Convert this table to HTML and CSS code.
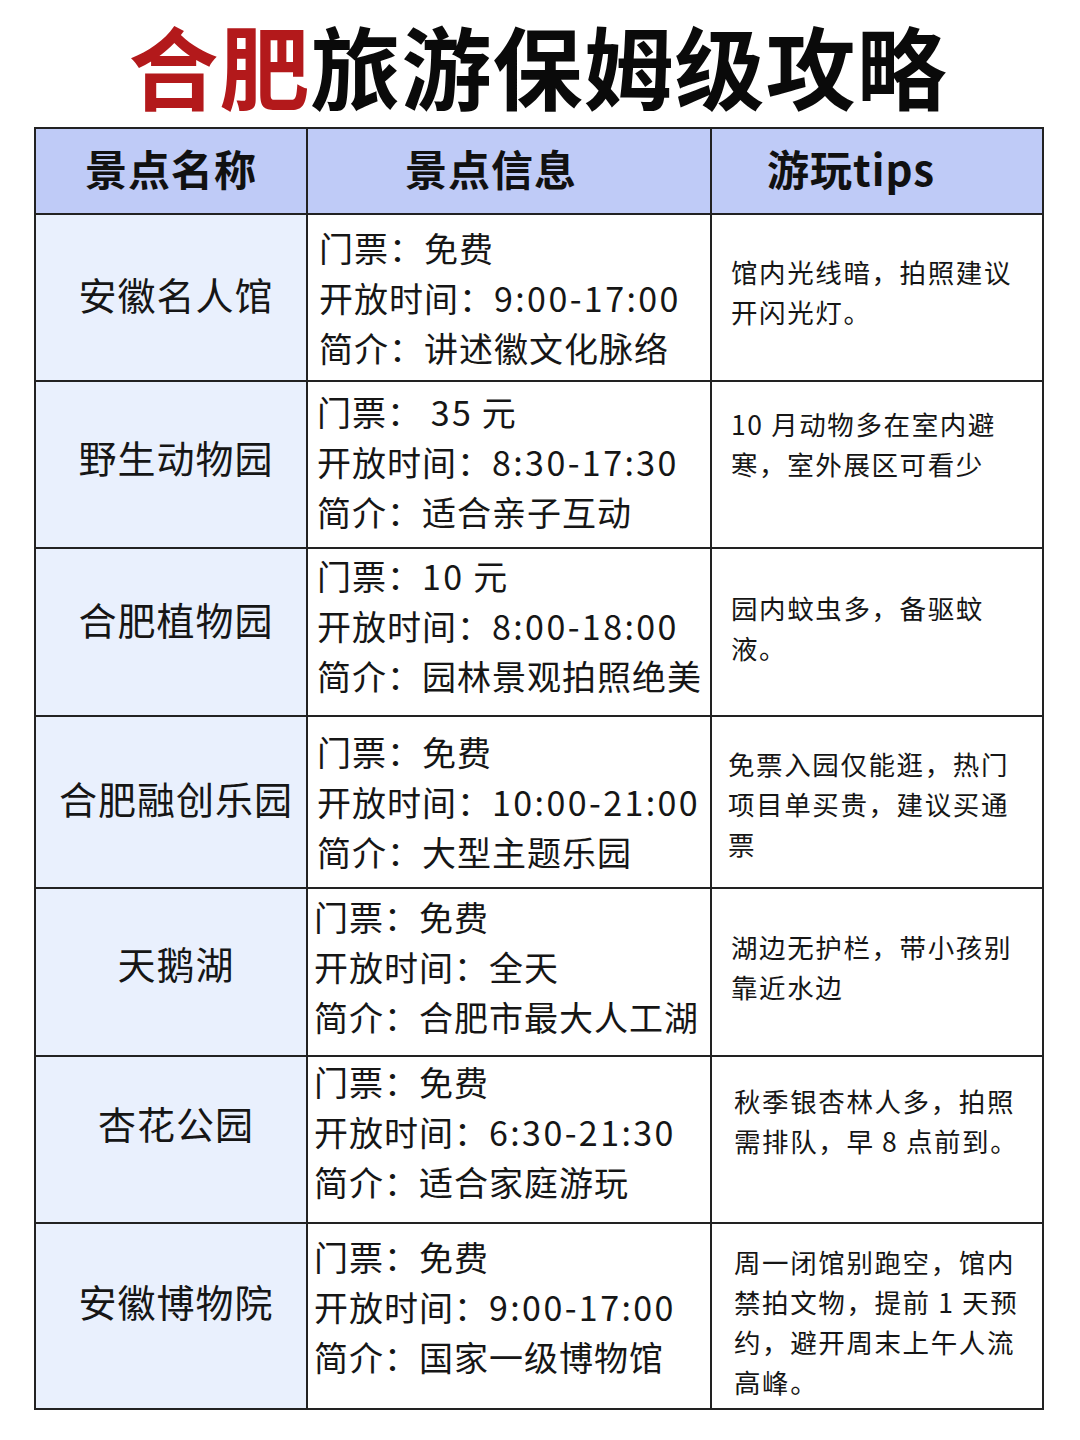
FILE: index.html
```html
<!DOCTYPE html>
<html lang="zh">
<head>
<meta charset="utf-8">
<link rel="stylesheet" href="styles.css">
</head>
<body>
<div class="page">
  <h1 class="title"><span class="red">合肥</span>旅游保姆级攻略</h1>
  <table class="guide">
    <colgroup><col class="c1"><col class="c2"><col class="c3"></colgroup>
    <thead>
      <tr class="rh"><th class="h1">景点名称</th><th class="h2">景点信息</th><th class="h3">游玩tips</th></tr>
    </thead>
    <tbody>
      <tr class="r1">
        <td class="name">安徽名人馆</td>
        <td class="info">门票：免费<br>开放时间：<span class="num">9:00-17:00</span><br>简介：讲述徽文化脉络</td>
        <td class="tips">馆内光线暗，拍照建议<br>开闪光灯。</td>
      </tr>
      <tr class="r2">
        <td class="name">野生动物园</td>
        <td class="info">门票： <span class="num">35</span> 元<br>开放时间：<span class="num">8:30-17:30</span><br>简介：适合亲子互动</td>
        <td class="tips">10 月动物多在室内避<br>寒，室外展区可看少</td>
      </tr>
      <tr class="r3">
        <td class="name">合肥植物园</td>
        <td class="info">门票：<span class="num">10</span> 元<br>开放时间：<span class="num">8:00-18:00</span><br>简介：园林景观拍照绝美</td>
        <td class="tips">园内蚊虫多，备驱蚊<br>液。</td>
      </tr>
      <tr class="r4">
        <td class="name">合肥融创乐园</td>
        <td class="info">门票：免费<br>开放时间：<span class="num">10:00-21:00</span><br>简介：大型主题乐园</td>
        <td class="tips">免票入园仅能逛，热门<br>项目单买贵，建议买通<br>票</td>
      </tr>
      <tr class="r5">
        <td class="name">天鹅湖</td>
        <td class="info">门票：免费<br>开放时间：全天<br>简介：合肥市最大人工湖</td>
        <td class="tips">湖边无护栏，带小孩别<br>靠近水边</td>
      </tr>
      <tr class="r6">
        <td class="name">杏花公园</td>
        <td class="info">门票：免费<br>开放时间：<span class="num">6:30-21:30</span><br>简介：适合家庭游玩</td>
        <td class="tips">秋季银杏林人多，拍照<br>需排队，早 8 点前到。</td>
      </tr>
      <tr class="r7">
        <td class="name">安徽博物院</td>
        <td class="info">门票：免费<br>开放时间：<span class="num">9:00-17:00</span><br>简介：国家一级博物馆</td>
        <td class="tips">周一闭馆别跑空，馆内<br>禁拍文物，提前 1 天预<br>约，避开周末上午人流<br>高峰。</td>
      </tr>
    </tbody>
  </table>
</div>
</body>
</html>
```

FILE: styles.css
```css
html, body {
  margin: 0;
  padding: 0;
  background: #ffffff;
}
body {
  font-family: "Noto Sans CJK SC", "Noto Sans", sans-serif;
  color: #111111;
}
.page {
  width: 1080px;
  height: 1440px;
  padding-left: 34px;
  box-sizing: border-box;
}
.title {
  margin: 0;
  height: 127px;
  width: 1008px;
  line-height: 128px;
  text-align: center;
  font-size: 90px;
  font-weight: 700;
  letter-spacing: 1px;
  color: #0a0a0a;
  white-space: nowrap;
}
.red {
  color: #b3191b;
}
.guide {
  border-collapse: collapse;
  width: 1008px;
  table-layout: fixed;
}
.c1 { width: 272px; }
.c2 { width: 404px; }
.c3 { width: 332px; }
.guide th, .guide td {
  border: 2px solid #222222;
  padding: 0;
}
.rh { height: 86px; }
.guide th {
  background: #bfcbf7;
  font-size: 42px;
  font-weight: 700;
  color: #111111;
  text-align: center;
  letter-spacing: 1px;
  padding-bottom: 8px;
}
.guide th.h2 { padding-right: 36px; }
.guide th.h3 { padding-right: 52px; }
.guide td {
  vertical-align: middle;
}
.name {
  background: #e9f0fd;
  text-align: center;
  font-size: 38px;
  letter-spacing: 1px;
  color: #161616;
}
.guide td.name {
  padding-left: 10px;
  padding-bottom: 8px;
}
.info {
  font-size: 34px;
  line-height: 50px;
  white-space: nowrap;
  letter-spacing: 1px;
  color: #161616;
}
.num {
  letter-spacing: 2.4px;
}
.guide td.info {
  padding-left: 11px;
}
.tips {
  font-size: 26.5px;
  line-height: 40px;
  white-space: nowrap;
  letter-spacing: 1.6px;
  color: #161616;
}
.guide td.tips {
  padding-left: 19px;
  padding-bottom: 12px;
}

.r1 { height: 167px; }
.r2 { height: 167px; }
.r3 { height: 168px; }
.r4 { height: 172px; }
.r5 { height: 168px; }
.r6 { height: 167px; }
.r7 { height: 186px; }

.guide .r2 td.name { padding-bottom: 16px; }
.guide .r3 td.name { padding-bottom: 28px; }
.guide .r4 td.name { padding-bottom: 10px; }
.guide .r5 td.name { padding-bottom: 20px; }
.guide .r6 td.name { padding-bottom: 34px; }
.guide .r7 td.name { padding-bottom: 32px; }

.guide .r2 td.info { padding-bottom: 6px; padding-left: 9px; }
.guide .r3 td.info { padding-bottom: 12px; padding-left: 9px; }
.guide .r4 td.info { padding-left: 9px; }
.guide .r5 td.info { padding-bottom: 10px; padding-left: 6px; }
.guide .r6 td.info { padding-bottom: 15px; padding-left: 6px; }
.guide .r7 td.info { padding-bottom: 18px; padding-left: 6px; }

.guide .r2 td.tips { padding-bottom: 42px; }
.guide .r3 td.tips { padding-bottom: 8px; }
.guide .r4 td.tips { padding-bottom: 0; padding-top: 4px; padding-left: 16px; }
.guide .r5 td.tips { padding-bottom: 10px; }
.guide .r6 td.tips { padding-bottom: 38px; padding-left: 22px; }
.guide .r7 td.tips { padding-bottom: 0; padding-top: 12px; padding-left: 22px; }
```
